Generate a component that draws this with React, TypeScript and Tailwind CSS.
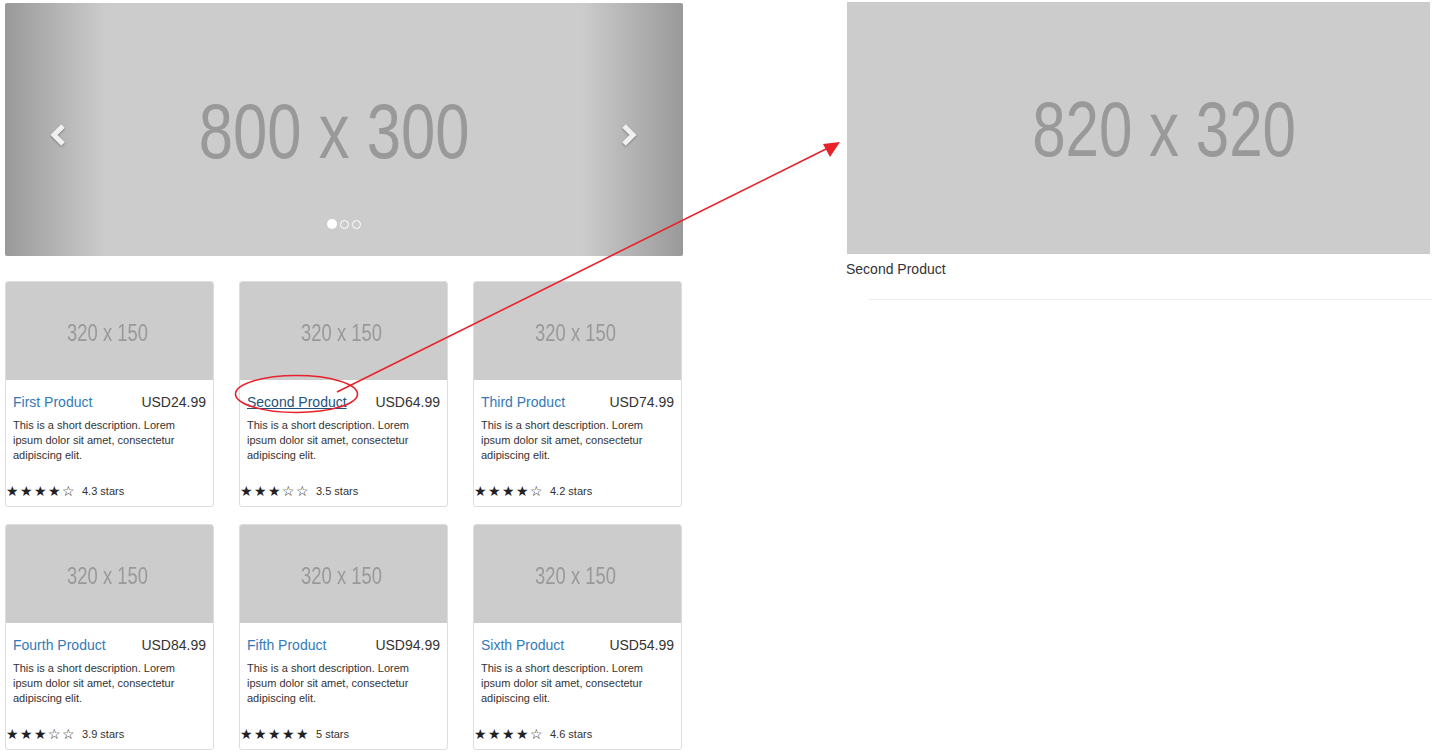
import React from 'react';

type Product = {
  name: string;
  price: string;
  rating: number;
  label: string;
};

const products: Product[] = [
  { name: 'First Product', price: 'USD24.99', rating: 4, label: '4.3 stars' },
  { name: 'Second Product', price: 'USD64.99', rating: 3, label: '3.5 stars' },
  { name: 'Third Product', price: 'USD74.99', rating: 4, label: '4.2 stars' },
  { name: 'Fourth Product', price: 'USD84.99', rating: 3, label: '3.9 stars' },
  { name: 'Fifth Product', price: 'USD94.99', rating: 5, label: '5 stars' },
  { name: 'Sixth Product', price: 'USD54.99', rating: 4, label: '4.6 stars' },
];

const Chevron: React.FC<{ dir: 'left' | 'right' }> = ({ dir }) => (
  <svg width="22" height="26" viewBox="0 0 22 26" className="opacity-80 drop-shadow-[0_1px_1px_rgba(0,0,0,0.4)]">
    <polyline
      points={dir === 'left' ? '15,4 6,13 15,22' : '7,4 16,13 7,22'}
      fill="none"
      stroke="#ffffff"
      strokeWidth="5"
      strokeLinejoin="miter"
    />
  </svg>
);

const Carousel: React.FC = () => (
  <div className="relative h-[253px] w-[678px] overflow-hidden rounded-[2px] bg-[#cccccc]">
    <div className="flex h-full items-center justify-center pt-[4px] pr-[20px]">
      <span className="scale-x-80 text-[77px] leading-none text-[#999999]">800 x 300</span>
    </div>
    <div className="absolute inset-y-0 left-0 flex w-[102px] items-center justify-center bg-gradient-to-r from-black/25 to-black/0 pt-[10px] pl-[6px]">
      <Chevron dir="left" />
    </div>
    <div className="absolute inset-y-0 right-0 flex w-[102px] items-center justify-center bg-gradient-to-l from-black/25 to-black/0 pt-[10px] pr-[8px]">
      <Chevron dir="right" />
    </div>
    <div className="absolute bottom-[27px] left-0 right-0 flex items-center justify-center gap-[3px]">
      <span className="h-[10px] w-[10px] rounded-full bg-white" />
      <span className="h-[9px] w-[9px] rounded-full border border-white" />
      <span className="h-[9px] w-[9px] rounded-full border border-white" />
    </div>
  </div>
);

const ProductCard: React.FC<{ p: Product }> = ({ p }) => (
  <div className="flex h-[226px] flex-col overflow-hidden rounded-[3px] border border-[#dddddd] bg-white">
    <div className="flex h-[98px] shrink-0 items-center justify-center bg-[#cccccc] pt-[4px] pr-[4px]">
      <span className="scale-x-80 text-[23px] leading-none text-[#999999]">320 x 150</span>
    </div>
    <div className="px-[7px] pt-[12px]">
      <div className="flex items-center justify-between text-[14px] leading-5">
        <a
          href="#"
          className={
            p.name === 'Second Product'
              ? 'text-[#23527c] underline'
              : 'text-[#337ab7]'
          }
        >
          {p.name}
        </a>
        <span className="text-[#333333]">{p.price}</span>
      </div>
      <p className="mt-[6px] text-[11px] leading-[15px] text-[#333333]">
        This is a short description. Lorem ipsum dolor sit amet, consectetur adipiscing elit.
      </p>
    </div>
    <div className="mt-auto mb-[7px] flex items-center text-[#333333]">
      {[0, 1, 2, 3, 4].map((i) => (
        <span
          key={i}
          className="w-[14px] text-[14px] leading-4 text-[#222222]"
          style={{ fontFamily: '"DejaVu Sans", sans-serif' }}
        >
          {i < p.rating ? '★' : '☆'}
        </span>
      ))}
      <span className="ml-[6px] text-[11px] leading-4">{p.label}</span>
    </div>
  </div>
);

export default function App() {
  return (
    <div
      className="relative flex h-[754px] w-[1432px] items-start overflow-hidden bg-white"
      style={{ fontFamily: '"Liberation Sans", Arial, sans-serif' }}
    >
      <div className="ml-[5px] mt-[3px] w-[678px]">
        <Carousel />
        <div className="mt-[25px] grid grid-cols-[209px_209px_209px] gap-x-[25px] gap-y-[17px]">
          {products.map((p) => (
            <ProductCard key={p.name} p={p} />
          ))}
        </div>
      </div>

      <div className="ml-[163px] mt-[2px] flex-1">
        <div className="ml-px flex h-[252px] w-[583px] items-center justify-center bg-[#cccccc] pl-[52px] pt-[2px]">
          <span className="scale-x-[0.78] text-[77px] leading-none text-[#999999]">820 x 320</span>
        </div>
        <div className="mt-[5px] text-[14px] leading-5 text-[#333333]">Second Product</div>
        <div className="ml-[23px] mt-[20px] h-px bg-[#eeeeee]" />
      </div>

      <svg
        className="pointer-events-none absolute left-0 top-0"
        width="1432"
        height="754"
        viewBox="0 0 1432 754"
      >
        <ellipse cx="296.5" cy="394" rx="61" ry="18.5" fill="none" stroke="#e8212b" strokeWidth="1.6" />
        <line x1="337" y1="392" x2="830" y2="147" stroke="#e8212b" strokeWidth="1.6" />
        <polygon points="840,142 823,144 830,157" fill="#e8212b" />
      </svg>
    </div>
  );
}
